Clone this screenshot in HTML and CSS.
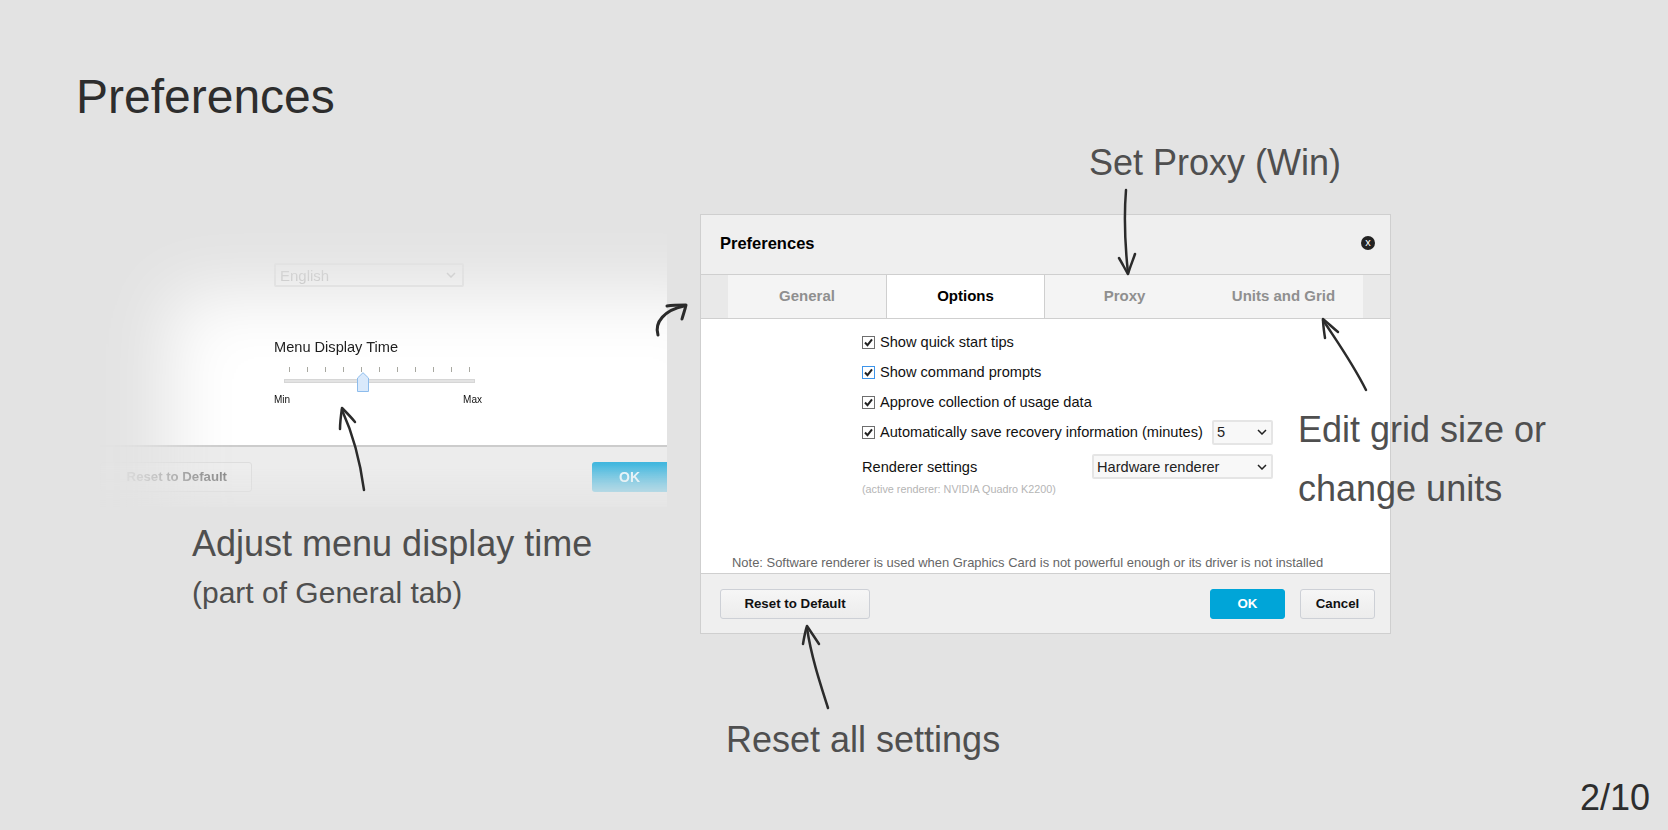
FILE: index.html
```html
<!DOCTYPE html>
<html lang="en">
<head>
    <meta charset="UTF-8">
    <meta name="viewport" content="width=device-width, initial-scale=1.0">
    <title>Preferences</title>
    <link rel="stylesheet" href="styles.css">
</head>
<body>
    <div class="slide">
        <h1 class="slide-title">Preferences</h1>

        <!-- faded crop of the General tab -->
        <div class="crop">
            <div class="crop-body">
                <div class="crop-select">English
                    <svg class="chevron" width="10" height="6" viewBox="0 0 10 6"><path d="M1 1l4 4 4-4" fill="none" stroke="#aaa" stroke-width="1.5"/></svg>
                </div>
                <div class="crop-label">Menu Display Time</div>
                <div class="slider">
                    <div class="ticks">
                        <i></i><i></i><i></i><i></i><i></i><i></i><i></i><i></i><i></i><i></i><i></i>
                    </div>
                    <div class="track"></div>
                    <svg class="thumb" width="12" height="20" viewBox="0 0 12 20"><path d="M.5 19.5V6L6 .7 11.5 6v13.5z" fill="#d9e9fb" stroke="#8dbcec"/></svg>
                    <div class="slider-ends"><span>Min</span><span>Max</span></div>
                </div>
            </div>
            <div class="crop-footer">
                <div class="crop-reset">Reset to Default</div>
                <div class="crop-ok">OK</div>
            </div>
        </div>

        <!-- main dialog -->
        <div class="dialog">
            <div class="dialog-head">
                <span class="dialog-title">Preferences</span>
                <span class="close">x</span>
            </div>
            <div class="tabbar">
                <div class="tabs">
                    <div class="tab first">General</div>
                    <div class="tab active">Options</div>
                    <div class="tab">Proxy</div>
                    <div class="tab">Units and Grid</div>
                </div>
            </div>
            <div class="dialog-body">
                <div class="options">
                    <div class="check-row">
                        <span class="box"><svg width="9" height="9" viewBox="0 0 9 9"><path d="M1 4.5l2.5 2.7L8 1.3" fill="none" stroke="#222" stroke-width="2"/></svg></span>
                        Show quick start tips
                    </div>
                    <div class="check-row">
                        <span class="box focus"><svg width="9" height="9" viewBox="0 0 9 9"><path d="M1 4.5l2.5 2.7L8 1.3" fill="none" stroke="#222" stroke-width="2"/></svg></span>
                        Show command prompts
                    </div>
                    <div class="check-row">
                        <span class="box"><svg width="9" height="9" viewBox="0 0 9 9"><path d="M1 4.5l2.5 2.7L8 1.3" fill="none" stroke="#222" stroke-width="2"/></svg></span>
                        Approve collection of usage data
                    </div>
                    <div class="check-row">
                        <span class="box"><svg width="9" height="9" viewBox="0 0 9 9"><path d="M1 4.5l2.5 2.7L8 1.3" fill="none" stroke="#222" stroke-width="2"/></svg></span>
                        Automatically save recovery information (minutes)
                        <div class="select small">5
                            <svg class="chevron" width="10" height="6" viewBox="0 0 10 6"><path d="M1 1l4 4 4-4" fill="none" stroke="#222" stroke-width="1.5"/></svg>
                        </div>
                    </div>
                    <div class="renderer-row">
                        <span>Renderer settings</span>
                        <div class="select wide">Hardware renderer
                            <svg class="chevron" width="10" height="6" viewBox="0 0 10 6"><path d="M1 1l4 4 4-4" fill="none" stroke="#222" stroke-width="1.5"/></svg>
                        </div>
                    </div>
                    <div class="active-renderer">(active renderer: NVIDIA Quadro K2200)</div>
                </div>
                <div class="note">Note: Software renderer is used when Graphics Card is not powerful enough or its driver is not installed</div>
            </div>
            <div class="dialog-foot">
                <div class="btn reset">Reset to Default</div>
                <div class="foot-right">
                    <div class="btn ok">OK</div>
                    <div class="btn">Cancel</div>
                </div>
            </div>
        </div>

        <div class="caption proxy-cap">Set Proxy (Win)</div>
        <div class="caption grid-cap">Edit grid size or<br>change units</div>
        <div class="caption menu-cap">Adjust menu display time<br><span class="sub">(part of General tab)</span></div>
        <div class="caption reset-cap">Reset all settings</div>
        <div class="page-num">2/10</div>

        <!-- hand drawn arrows -->
        <svg class="arrows" width="1668" height="830" viewBox="0 0 1668 830">
            <g fill="none" stroke="#2b2b2b" stroke-width="2.5" stroke-linecap="round" stroke-linejoin="round">
                <path d="M1126 190C1124 215 1125 245 1128 273"/>
                <path d="M1119 258C1122 263 1125 269 1128 274 1130 267 1133 260 1135 254"/>
                <path d="M1366 390C1352 362 1336 340 1323 320"/>
                <path d="M1325 338C1324 331 1323 325 1323 319 1328 323 1333 328 1338 332"/>
                <path d="M828 708C819 680 811 655 807 628"/>
                <path d="M803 644C804 638 805 632 807 626 811 632 815 638 819 644"/>
                <path d="M364 490C360 460 352 432 342 410"/>
                <path d="M340 429C340 422 341 415 342 408 346 412 351 417 355 422"/>
            </g>
            <g fill="none" stroke="#2b2b2b" stroke-width="3" stroke-linecap="round" stroke-linejoin="round">
                <path d="M658 335C654 322 665 310 684 306"/>
                <path d="M667 306C673 305 680 305 686 305 685 310 683 315 682 319"/>
            </g>
        </svg>
    </div>
</body>
</html>
```

FILE: styles.css
```css
html, body {
    margin: 0;
    height: 100%;
}
body {
    background-color: #e3e3e3;
    font-family: "Liberation Sans", Arial, sans-serif;
    overflow: hidden;
}
.slide {
    position: relative;
    width: 1668px;
    height: 830px;
}
.slide-title {
    position: absolute;
    left: 76px;
    top: 67px;
    margin: 0;
    font-weight: normal;
    font-size: 48px;
    line-height: 60px;
    color: #2d2d2d;
}

/* annotations */
.caption {
    position: absolute;
    font-size: 36px;
    color: #4f4f4f;
    white-space: nowrap;
}
.proxy-cap {
    left: 1089px;
    top: 142px;
}
.grid-cap {
    left: 1298px;
    top: 400px;
    line-height: 59px;
}
.menu-cap {
    left: 192px;
    top: 520px;
    line-height: 47px;
}
.sub {
    font-size: 30px;
}
.reset-cap {
    left: 726px;
    top: 719px;
}
.page-num {
    position: absolute;
    right: 18px;
    top: 777px;
    font-size: 36px;
    color: #2d2d2d;
}
.arrows {
    position: absolute;
    left: 0;
    top: 0;
    pointer-events: none;
}

/* General tab crop */
.crop {
    position: absolute;
    left: 100px;
    top: 220px;
    width: 567px;
    height: 287px;
    display: flex;
    flex-direction: column;
    background-color: #fff;
    -webkit-mask-image: linear-gradient(to bottom, #000 245px, rgba(0,0,0,.3) 287px);
    mask-image: linear-gradient(to bottom, #000 245px, rgba(0,0,0,.3) 287px);
}
/* soft vignette over the top and left of the crop */
.crop::after {
    content: "";
    position: absolute;
    left: 0;
    top: 0;
    right: 0;
    bottom: 0;
    box-shadow: inset 70px 75px 70px #e3e3e3;
    pointer-events: none;
}
.crop-body {
    height: 227px;
    padding: 43px 0 0 174px;
    box-sizing: border-box;
    border-bottom: 2px solid #ccc;
    flex-shrink: 0;
}
.crop-select {
    width: 190px;
    height: 24px;
    box-sizing: border-box;
    padding-left: 4px;
    display: flex;
    align-items: center;
    justify-content: space-between;
    padding-right: 6px;
    border: 2px solid #e0e0e0;
    border-radius: 2px;
    color: #aaa;
    font-size: 15px;
}
.crop-label {
    margin-top: 50px;
    font-size: 14.6px;
    line-height: 20px;
    color: #111;
}
.slider {
    position: relative;
    width: 208px;
    margin-top: 10px;
}
.ticks {
    display: flex;
    justify-content: space-between;
    width: 181px;
    margin-left: 15px;
    height: 5px;
}
.ticks i {
    width: 1px;
    height: 5px;
    background-color: #a8a8a0;
}
.track {
    width: 191px;
    height: 4px;
    margin: 7px 0 0 10px;
    background-color: #e3e3e3;
    border: 1px solid #d6d6d6;
    box-sizing: border-box;
}
.thumb {
    position: absolute;
    left: 83px;
    top: 5px;
}
.slider-ends {
    display: flex;
    justify-content: space-between;
    margin-top: 11px;
    font-size: 10px;
    line-height: 12px;
    color: #111;
}
.crop-footer {
    flex: 1;
    display: flex;
    justify-content: space-between;
    align-items: flex-start;
    padding-top: 15px;
    background-color: #ececec;
}
.crop-reset {
    width: 152px;
    height: 30px;
    box-sizing: border-box;
    border: 1px solid #ddd;
    border-radius: 3px;
    text-align: right;
    padding-right: 24px;
    line-height: 28px;
    font-size: 13.2px;
    font-weight: bold;
    color: #777;
    background-color: #ededed;
}
.crop-ok {
    width: 75px;
    height: 30px;
    border-radius: 3px 0 0 3px;
    background: linear-gradient(to bottom, #3fb6de, #8fd0e6);
    color: rgba(255, 255, 255, .85);
    text-align: center;
    line-height: 30px;
    font-size: 14px;
    font-weight: bold;
}

/* dialog */
.dialog {
    position: absolute;
    left: 700px;
    top: 214px;
    width: 691px;
    height: 420px;
    box-sizing: border-box;
    border: 1px solid #cfcfcf;
    display: flex;
    flex-direction: column;
    background-color: #fff;
    color: #111;
}
.dialog-head {
    height: 60px;
    flex-shrink: 0;
    box-sizing: border-box;
    display: flex;
    align-items: center;
    justify-content: space-between;
    padding: 0 15px 3px 19px;
    background-color: #efefef;
    border-bottom: 1px solid #cfcfcf;
}
.dialog-title {
    font-size: 16.5px;
    font-weight: bold;
    color: #000;
}
.close {
    width: 14px;
    height: 14px;
    margin-bottom: 1px;
    border-radius: 50%;
    background-color: #222;
    color: #fff;
    font-size: 11px;
    line-height: 12px;
    text-align: center;
}
.tabbar {
    height: 43px;
    flex-shrink: 0;
    padding-left: 27px;
    background-color: #e9e9e9;
    border-bottom: 1px solid #cfcfcf;
}
.tabs {
    display: flex;
    width: 635px;
    height: 43px;
    background-color: #f4f4f4;
}
.tab {
    width: 159px;
    box-sizing: border-box;
    text-align: center;
    line-height: 42px;
    font-size: 15px;
    font-weight: bold;
    color: #8f8f8f;
}
.tab.first {
    width: 158px;
}
.tab.active {
    background-color: #fff;
    color: #000;
    border-left: 1px solid #cfcfcf;
    border-right: 1px solid #cfcfcf;
}
.dialog-body {
    flex: 1;
    display: flex;
    flex-direction: column;
    justify-content: space-between;
}
.options {
    width: 411px;
    padding: 8px 0 0 161px;
    font-size: 14.6px;
}
.check-row {
    display: flex;
    align-items: center;
    height: 30px;
    gap: 5px;
    white-space: nowrap;
}
.box {
    width: 13px;
    height: 13px;
    box-sizing: border-box;
    border: 1px solid #6e6e6e;
    display: flex;
    align-items: center;
    justify-content: center;
    flex-shrink: 0;
}
.box.focus {
    border-color: #3d94ea;
}
.select {
    box-sizing: border-box;
    height: 25px;
    display: flex;
    align-items: center;
    justify-content: space-between;
    padding: 0 4px 0 3px;
    border: 2px solid #e5e5e5;
    border-radius: 2px;
    background-color: #f8f8f8;
    color: #222;
    font-size: 14.6px;
}
.select.small {
    width: 61px;
    margin-left: auto;
}
.select.wide {
    width: 181px;
}
.renderer-row {
    display: flex;
    align-items: center;
    justify-content: space-between;
    margin-top: 7px;
}
.active-renderer {
    margin-top: 4px;
    font-size: 10.8px;
    color: #b5b5b5;
}
.note {
    padding: 0 0 2px 31px;
    font-size: 12.95px;
    line-height: 17px;
    color: #666;
}
.dialog-foot {
    height: 60px;
    flex-shrink: 0;
    box-sizing: border-box;
    display: flex;
    align-items: flex-start;
    justify-content: space-between;
    padding: 15px 15px 0 19px;
    background-color: #efefef;
    border-top: 1px solid #cfcfcf;
}
.foot-right {
    display: flex;
    gap: 15px;
}
.btn {
    width: 75px;
    height: 30px;
    box-sizing: border-box;
    border: 1px solid #cdd0d6;
    border-radius: 3px;
    background: linear-gradient(to bottom, #f6f6f6, #ececec);
    text-align: center;
    line-height: 28px;
    font-size: 13.3px;
    font-weight: bold;
    color: #111;
}
.btn.reset {
    width: 150px;
}
.btn.ok {
    border-color: #00a5d8;
    background: #00a5d8;
    color: #fff;
}
```
